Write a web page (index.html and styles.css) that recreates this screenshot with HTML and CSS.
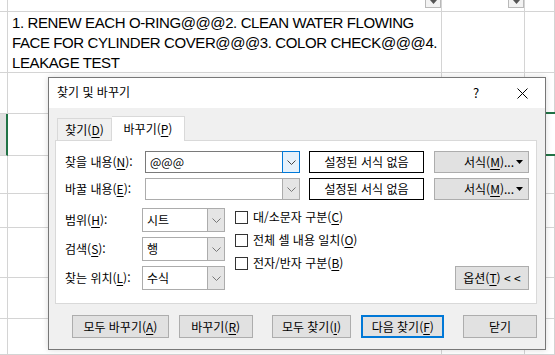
FILE: index.html
```html
<!DOCTYPE html>
<html lang="ko">
<head>
  <meta charset="UTF-8" />
  <title>찾기 및 바꾸기</title>
  <link rel="stylesheet" href="styles.css">
</head>
<body>
  <!-- Spreadsheet behind the dialog -->
  <div class="sheet">
    <div class="cell"></div>
    <div class="cell head"><span class="filter"><svg width="7" height="4" viewBox="0 0 7 4"><polygon points="0,0 7,0 3.5,4" fill="#555"/></svg></span></div>
    <div class="cell head"><span class="filter"><svg width="7" height="4" viewBox="0 0 7 4"><polygon points="0,0 7,0 3.5,4" fill="#555"/></svg></span></div>
    <div class="cell"></div>

    <div class="cell"></div>
    <div class="cell text">1. RENEW EACH O-RING@@@2. CLEAN WATER FLOWING FACE FOR CYLINDER COVER@@@3. COLOR CHECK@@@4. LEAKAGE TEST</div>
    <div class="cell"></div>
    <div class="cell"></div>

    <div class="cell"></div><div class="cell"></div><div class="cell"></div><div class="cell"></div>

    <div class="cell shade"></div>
    <div class="cell"></div>
    <div class="cell selected"></div>

    <div class="cell"></div><div class="cell"></div><div class="cell"></div><div class="cell"></div>
    <div class="cell"></div><div class="cell"></div><div class="cell"></div><div class="cell"></div>
    <div class="cell"></div><div class="cell"></div><div class="cell"></div><div class="cell"></div>
    <div class="cell"></div><div class="cell"></div><div class="cell"></div><div class="cell"></div>
    <div class="cell"></div><div class="cell"></div><div class="cell"></div><div class="cell"></div>
  </div>

  <!-- Find & Replace dialog -->
  <div class="dialog">
    <div class="titlebar">
      <span class="title">찾기 및 바꾸기</span>
      <span class="title-btn">?</span>
      <span class="title-btn">
        <svg width="11" height="11" viewBox="0 0 11 11"><path d="M0.5 0.5 L10.5 10.5 M10.5 0.5 L0.5 10.5" stroke="#000" stroke-width="1"/></svg>
      </span>
    </div>

    <div class="body">
      <div class="tabs">
        <div class="tab">찾기(<u>D</u>)</div>
        <div class="tab active">바꾸기(<u>P</u>)</div>
      </div>

      <div class="panel">
        <div class="row">
          <label class="label">찾을 내용(<u>N</u>):</label>
          <div class="combo wide focus">
            <span class="value">@@@</span>
            <span class="drop"><svg width="9" height="5" viewBox="0 0 9 5"><polyline points="0.5,0.5 4.5,4.5 8.5,0.5" fill="none" stroke="#444"/></svg></span>
          </div>
          <div class="preview">설정된 서식 없음</div>
          <button class="btn format"><span>서식(<u>M</u>)...</span><svg width="7" height="4" viewBox="0 0 7 4"><polygon points="0,0 7,0 3.5,4" fill="#000"/></svg></button>
        </div>
        <div class="row">
          <label class="label">바꿀 내용(<u>E</u>):</label>
          <div class="combo wide">
            <span class="value"></span>
            <span class="drop"><svg width="9" height="5" viewBox="0 0 9 5"><polyline points="0.5,0.5 4.5,4.5 8.5,0.5" fill="none" stroke="#777"/></svg></span>
          </div>
          <div class="preview">설정된 서식 없음</div>
          <button class="btn format"><span>서식(<u>M</u>)...</span><svg width="7" height="4" viewBox="0 0 7 4"><polygon points="0,0 7,0 3.5,4" fill="#000"/></svg></button>
        </div>

        <div class="options">
          <div class="selects">
            <label class="label">범위(<u>H</u>):</label>
            <div class="combo small">
              <span class="value">시트</span>
              <span class="drop"><svg width="9" height="5" viewBox="0 0 9 5"><polyline points="0.5,0.5 4.5,4.5 8.5,0.5" fill="none" stroke="#777"/></svg></span>
            </div>
            <label class="label">검색(<u>S</u>):</label>
            <div class="combo small">
              <span class="value">행</span>
              <span class="drop"><svg width="9" height="5" viewBox="0 0 9 5"><polyline points="0.5,0.5 4.5,4.5 8.5,0.5" fill="none" stroke="#777"/></svg></span>
            </div>
            <label class="label">찾는 위치(<u>L</u>):</label>
            <div class="combo small">
              <span class="value">수식</span>
              <span class="drop"><svg width="9" height="5" viewBox="0 0 9 5"><polyline points="0.5,0.5 4.5,4.5 8.5,0.5" fill="none" stroke="#777"/></svg></span>
            </div>
          </div>

          <div class="checks">
            <div class="check"><span class="box"></span><span>대/소문자 구분(<u>C</u>)</span></div>
            <div class="check"><span class="box"></span><span>전체 셀 내용 일치(<u>O</u>)</span></div>
            <div class="check"><span class="box"></span><span>전자/반자 구분(<u>B</u>)</span></div>
          </div>

          <button class="btn toggle">옵션(<u>T</u>) &lt; &lt;</button>
        </div>
      </div>

      <div class="actions">
        <button class="btn w97">모두 바꾸기(<u>A</u>)</button>
        <button class="btn w74">바꾸기(<u>R</u>)</button>
        <button class="btn w80 group">모두 찾기(<u>I</u>)</button>
        <button class="btn w83 default">다음 찾기(<u>F</u>)</button>
        <button class="btn w74 group">닫기</button>
      </div>
    </div>
  </div>
</body>
</html>
```

FILE: styles.css
```css
/* Base */
*, *::before, *::after {
  box-sizing: border-box;
  margin: 0;
  padding: 0;
}
body {
  width: 555px;
  height: 355px;
  overflow: hidden;
  position: relative;
  background: #fff;
  font-family: "Noto Sans CJK KR", "Noto Sans", sans-serif;
  color: #000;
}
u { text-decoration-thickness: 1px; text-underline-offset: 2px; }

/* Spreadsheet grid */
.sheet {
  display: grid;
  grid-template-columns: 8px 434px 83px 30px;
  grid-template-rows: 12px 61px 41px 42px 38px 34px 50px 41px 36px;
  height: 355px;
}
.cell {
  border-right: 1px solid #d4d4d4;
  border-bottom: 1px solid #d4d4d4;
}
.cell.head {
  display: flex;
  justify-content: flex-end;
  align-items: flex-end;
}
.filter {
  width: 16px;
  height: 16px;
  margin: 0 0 3px 0;
  background: #f3f3f3;
  border: 1px solid #b9b9b9;
  display: flex;
  align-items: flex-end;
  justify-content: center;
  padding-bottom: 3px;
}
.cell.text {
  font-family: "Liberation Sans", Arial, sans-serif;
  font-size: 15px;
  line-height: 20px;
  letter-spacing: -0.4px;
  color: #000;
  padding: 1px 0 0 4px;
}
.cell.shade {
  background: #e1e1e1;
  border-right: 2px solid #217346;
}
.cell.selected {
  grid-column: 3 / -1;
  margin-top: -2px;
  border-top: 2px solid #217346;
  border-bottom: 2px solid #217346;
  border-right: none;
}

/* Dialog window */
.dialog {
  position: absolute;
  left: 48px;
  top: 77px;
  width: 498px;
  height: 273px;
  background: #f0f0f0;
  border: 1px solid #777;
  box-shadow: 0 0 6px rgba(0,0,0,0.15);
  font-size: 12px;
  line-height: 16px;
}
.titlebar {
  height: 30px;
  background: #fff;
  display: flex;
  align-items: center;
  padding-left: 8px;
}
.title { flex: 1; margin-top: -2px; }
.title-btn {
  width: 46px;
  height: 30px;
  display: flex;
  align-items: center;
  justify-content: center;
  font-size: 13px;
}

.body { padding: 8px 8px 0 6px; }

/* Tabs */
.tabs {
  display: flex;
  align-items: flex-end;
  margin-left: 2px;
  height: 24px;
}
.tab {
  width: 55px;
  height: 22px;
  border: 1px solid #d9d9d9;
  border-bottom: none;
  display: flex;
  align-items: center;
  justify-content: center;
  background: #f0f0f0;
}
.tab.active {
  width: 73px;
  height: 25px;
  background: #fff;
  margin-bottom: -1px;
  position: relative;
  z-index: 1;
  border-left: none;
}

.panel {
  height: 164px;
  background: #fff;
  border: 1px solid #d9d9d9;
  padding: 10px 6px 0 9px;
}

/* Find / replace rows */
.row {
  display: flex;
  align-items: center;
  height: 22px;
  margin-bottom: 5px;
}
.label { display: block; width: 80px; }
.combo {
  display: flex;
  height: 22px;
  background: #fff;
  border: 1px solid #acacac;
}
.combo.wide { width: 155px; }
.combo.focus { border-color: #7a7a7a; }
.combo .value { flex: 1; padding-left: 4px; line-height: 20px; }
.drop {
  width: 17px;
  background: #e5e5e5;
  border-left: 1px solid #acacac;
  display: flex;
  align-items: center;
  justify-content: center;
}
.combo.focus .drop {
  background: #e5f1fb;
  border: 1px solid #0078d7;
  margin: -1px -1px -1px 0;
  width: 18px;
}
.preview {
  width: 115px;
  height: 22px;
  margin-left: 9px;
  border: 1px solid #000;
  text-align: center;
  line-height: 20px;
}

/* Buttons */
.btn {
  font: inherit;
  color: #000;
  background: #e1e1e1;
  border: 1px solid #adadad;
  height: 23px;
  display: flex;
  align-items: center;
  justify-content: center;
}
.btn.format {
  width: 95px;
  margin-left: 10px;
  height: 22px;
  justify-content: space-between;
  padding: 0 5px 0 29px;
}

/* Options section */
.options {
  display: flex;
  margin-top: 8px;
}
.selects {
  display: grid;
  grid-template-columns: 77px 83px;
  row-gap: 5px;
  align-items: center;
}
.selects .label { width: auto; }
.combo.small { height: 24px; }
.combo.small .value { line-height: 22px; }
.checks {
  margin: -2px 0 0 10px;
  display: flex;
  flex-direction: column;
  gap: 1px;
}
.check {
  height: 22px;
  display: flex;
  align-items: center;
  gap: 5px;
}
.box {
  width: 13px;
  height: 13px;
  border: 1px solid #333;
  background: #fff;
}
.btn.toggle {
  width: 74px;
  height: 24px;
  margin: auto 1px 0 auto;
}

/* Bottom action buttons */
.actions {
  display: flex;
  gap: 10px;
  padding: 11px 0 0 17px;
}
.w97 { width: 97px; }
.w74 { width: 74px; }
.w80 { width: 80px; }
.w83 { width: 83px; }
.group { margin-left: 9px; }
.btn.default { border: 2px solid #0078d7; }
```
